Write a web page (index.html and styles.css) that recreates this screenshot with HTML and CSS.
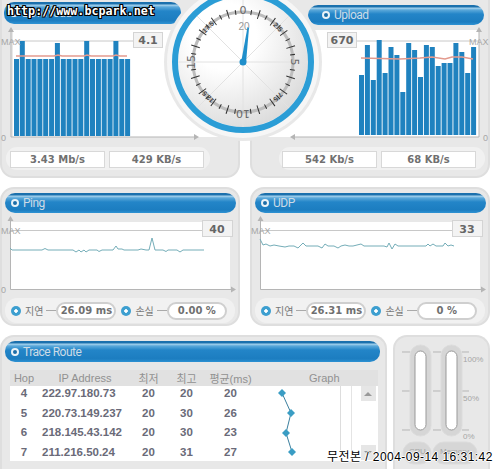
FILE: index.html

```html
<!DOCTYPE html>
<html lang="ko">
<head>
    <meta charset="UTF-8">
    <title>Network Monitor</title>
    <link rel="stylesheet" href="styles.css">
</head>
<body>
    <div class="dash">
        <!-- download -->
        <section class="panel panel-top">
            <div class="bar bar-down"><i class="dot"></i>Download</div>
            <svg class="chart-top" width="240" height="120" viewBox="0 26 240 120">
                <rect class="plot" x="13" y="30" width="227" height="107"/>
                <line class="grid" x1="11" y1="41" x2="134" y2="41"/>
                <path class="axis" d="M11 30V137H197"/>
                <path class="arrow" d="M11 27l-3 5h6zM199 137l-5-3v6z"/>
                <g class="bars">
                    <rect x="14" y="59" width="5" height="77"/><rect x="19.8" y="41" width="5" height="95"/><rect x="25.7" y="59" width="5" height="77"/><rect x="31.5" y="59" width="5" height="77"/><rect x="37.4" y="59" width="5" height="77"/><rect x="43.2" y="59" width="5" height="77"/><rect x="49.1" y="59" width="5" height="77"/><rect x="54.9" y="43" width="5" height="93"/><rect x="60.8" y="59" width="5" height="77"/><rect x="66.6" y="59" width="5" height="77"/><rect x="72.5" y="59" width="5" height="77"/><rect x="78.3" y="59" width="5" height="77"/><rect x="84.2" y="41" width="5" height="95"/><rect x="90" y="59" width="5" height="77"/><rect x="95.9" y="59" width="5" height="77"/><rect x="101.7" y="59" width="5" height="77"/><rect x="107.6" y="59" width="5" height="77"/><rect x="113.4" y="41" width="5" height="95"/><rect x="119.3" y="59" width="5" height="77"/><rect x="125.1" y="59" width="5" height="77"/>
                </g>
                <polyline class="avg" points="16,56 54,56 58,55 62,56 84,56 87,55 91,56 113,56 116,55 120,56 127,56"/>
                <text class="lbl" x="1" y="45">MAX</text>
                <text class="lbl" x="1" y="141">0</text>
                <rect class="valbox" x="133.500" y="32.500" width="29" height="15"/>
                <text class="val" x="148" y="44" text-anchor="middle">4.1</text>
            </svg>
            <div class="reads reads-down">
                <div class="read">3.43 Mb/s</div>
                <div class="read">429 KB/s</div>
            </div>
        </section>

        <!-- upload -->
        <section class="panel panel-top">
            <div class="bar bar-up"><i class="dot"></i>Upload</div>
            <svg class="chart-top" width="240" height="120" viewBox="250 26 240 120">
                <rect class="plot" x="250" y="30" width="229" height="107"/>
                <line class="grid" x1="356" y1="41" x2="479" y2="41"/>
                <path class="axis" d="M479 30V137H292"/>
                <path class="arrow" d="M479 27l-3 5h6zM290 137l5-3v6z"/>
                <g class="bars">
                    <rect x="359" y="75" width="5" height="60"/><rect x="364.900" y="45" width="5" height="90"/><rect x="370.800" y="80" width="5" height="55"/><rect x="376.700" y="40" width="5" height="95"/><rect x="382.600" y="73" width="5" height="62"/><rect x="388.500" y="47" width="5" height="88"/><rect x="394.400" y="55" width="5" height="80"/><rect x="400.300" y="92" width="5" height="43"/><rect x="406.200" y="43" width="5" height="92"/><rect x="412.100" y="50" width="5" height="85"/><rect x="418" y="77" width="5" height="58"/><rect x="423.900" y="45" width="5" height="90"/><rect x="429.800" y="47" width="5" height="88"/><rect x="435.700" y="66" width="5" height="69"/><rect x="441.600" y="63" width="5" height="72"/><rect x="447.500" y="63" width="5" height="72"/><rect x="453.400" y="43" width="5" height="92"/><rect x="459.300" y="52" width="5" height="83"/><rect x="465.200" y="73" width="5" height="62"/><rect x="471.100" y="47" width="5" height="88"/>
                </g>
                <polyline class="avg" points="361,58 400,59 420,58 432,57 445,59 452,57 462,57 473,59"/>
                <text class="lbl" x="469" y="45">MAX</text>
                <text class="lbl" x="483" y="141">0</text>
                <rect class="valbox" x="327.500" y="32.500" width="29" height="15"/>
                <text class="val" x="342" y="44" text-anchor="middle">670</text>
            </svg>
            <div class="reads reads-up">
                <div class="read">542 Kb/s</div>
                <div class="read">68 KB/s</div>
            </div>
        </section>

        <!-- ping -->
        <section class="panel panel-mid">
            <div class="bar bar-wide"><i class="dot"></i>Ping</div>
            <svg class="chart-mid" width="240" height="82" viewBox="0 214 240 82">
                <rect class="plot" x="10" y="222" width="220" height="67"/>
                <line class="grid" x1="10" y1="230.500" x2="203" y2="230.500"/>
                <path class="axis" d="M10.500 219V289.500H234"/>
                <path class="arrow" d="M10.500 216l-3 5h6zM236 289.500l-5-3v6z"/>
                <polyline class="trace" points="10,248 12,250 42,250 45,248.500 48,250 73,250 76,252 79,250 81,252 84,250 86,252 89,250 97,250 99,251.500 102,250 113,250 116,246 118,249 122,249 124,250 138,250 141,249 146,250 149,250 152,238 155,250 163,250 166,251.500 168,250 177,250 180,252 183,250 204,250"/>
                <text class="lbl" x="1" y="234">MAX</text>
                <text class="lbl" x="1" y="293">0</text>
                <rect class="valbox" x="202.500" y="220.500" width="30" height="16"/>
                <text class="val" x="217" y="233" text-anchor="middle">40</text>
            </svg>
            <div class="stats">
                <i class="play"></i><span class="stat-name">지연</span><i class="link"></i><span class="pill">26.09 ms</span>
                <i class="play play-2"></i><span class="stat-name">손실</span><i class="link"></i><span class="pill">0.00 %</span>
            </div>
        </section>

        <!-- udp -->
        <section class="panel panel-mid">
            <div class="bar bar-wide"><i class="dot"></i>UDP</div>
            <svg class="chart-mid" width="240" height="82" viewBox="250 214 240 82">
                <rect class="plot" x="260" y="222" width="220" height="67"/>
                <line class="grid" x1="260" y1="230.500" x2="453" y2="230.500"/>
                <path class="axis" d="M260.500 219V289.500H484"/>
                <path class="arrow" d="M260.500 216l-3 5h6zM486 289.500l-5-3v6z"/>
                <polyline class="trace" points="260,239 263,245 266,244 270,246 274,245 279,246 285,247 289,246 294,246 298,248 303,243 306,246 318,246 322,248 325,244 328,246 334,246 338,248 341,246 345,245 349,246 353,246 357,245 361,244 364,246 384,246 387,247 389,243 392,249 395,244 398,246 426,246 428,244 430,246 433,244 436,246 443,246 445,243 448,246 451,245 454,246"/>
                <text class="lbl" x="251" y="234">MAX</text>
                <rect class="valbox" x="452.500" y="220.500" width="30" height="16"/>
                <text class="val" x="467" y="233" text-anchor="middle">33</text>
            </svg>
            <div class="stats">
                <i class="play"></i><span class="stat-name">지연</span><i class="link"></i><span class="pill">26.31 ms</span>
                <i class="play play-2"></i><span class="stat-name">손실</span><i class="link"></i><span class="pill">0 %</span>
            </div>
        </section>

        <!-- trace route + cpu/mem -->
        <div class="bottom">
            <section class="panel panel-trace">
                <div class="bar bar-trace"><i class="dot"></i>Trace Route</div>
                <table class="trace-table">
                    <colgroup>
                        <col class="c-hop"><col class="c-ip"><col class="c-min"><col class="c-max"><col class="c-avg"><col class="c-graph"><col class="c-side">
                    </colgroup>
                    <thead>
                        <tr>
                            <th>Hop</th>
                            <th>IP Address</th>
                            <th>최저</th>
                            <th>최고</th>
                            <th class="th-avg">평균(ms)</th>
                            <th class="th-graph" colspan="2">Graph</th>
                        </tr>
                    </thead>
                    <tbody>
                        <tr>
                            <td>4</td><td class="ip">222.97.180.73</td><td>20</td><td>20</td><td>20</td>
                            <td class="graph-cell" rowspan="4">
                                <svg width="87" height="74" viewBox="253 386 87 74">
                                    <polyline class="hops" points="282,393 291,413 286,433 292,452"/>
                                    <g class="hop-dots">
                                        <path d="M282 389l4 4-4 4-4-4z"/>
                                        <path d="M291 409l4 4-4 4-4-4z"/>
                                        <path d="M286 429l4 4-4 4-4-4z"/>
                                        <path d="M292 448l4 4-4 4-4-4z"/>
                                    </g>
                                </svg>
                            </td>
                            <td class="side-cell" rowspan="4">
                                <div class="scroll">
                                    <div class="scroll-btn"><i class="tri"></i></div>
                                    <div class="scroll-btn"><i class="tri tri-down"></i></div>
                                </div>
                            </td>
                        </tr>
                        <tr><td>5</td><td class="ip">220.73.149.237</td><td>20</td><td>30</td><td>26</td></tr>
                        <tr><td>6</td><td class="ip">218.145.43.142</td><td>20</td><td>30</td><td>23</td></tr>
                        <tr class="last"><td>7</td><td class="ip">211.216.50.24</td><td>20</td><td>31</td><td>27</td></tr>
                    </tbody>
                </table>
            </section>
            <section class="panel panel-meter">
                <svg width="97" height="134" viewBox="393 335 97 134">
                    <path class="tick" d="M402 352h8M402 391h8M402 430h8M433 352h8M433 391h8M433 430h8M462 352h7M462 391h7M462 430h7"/>
                    <rect class="tube-out" x="410" y="345" width="21" height="91" rx="10.500"/>
                    <rect class="tube-in" x="415" y="351" width="11" height="79" rx="5.500"/>
                    <rect class="tube-out" x="441" y="345" width="21" height="91" rx="10.500"/>
                    <rect class="tube-in" x="446" y="351" width="11" height="79" rx="5.500"/>
                    <rect class="tube-out" x="403" y="442" width="28" height="22" rx="11"/>
                    <rect class="tube-out" x="433" y="442" width="44" height="22" rx="11"/>
                    <text class="lbl lbl-sm" x="463" y="362">100%</text>
                    <text class="lbl lbl-sm" x="463" y="401">50%</text>
                    <text class="lbl lbl-sm" x="463" y="439">0%</text>
                    <text class="lbl lbl-sm" x="409" y="454">CPU</text>
                    <text class="lbl lbl-sm" x="440" y="454">Memory</text>
                </svg>
            </section>
        </div>
    </div>

    <!-- dial sits over the two top panels -->
    <svg class="dial" width="170" height="150" viewBox="158 0 170 150">
        <defs>
            <radialGradient id="face" cx="0.35" cy="0.3" r="0.85">
                <stop offset="0.3" stop-color="#ffffff"/>
                <stop offset="1" stop-color="#d4d4d4"/>
            </radialGradient>
        </defs>
        <circle class="halo" cx="243" cy="62" r="79"/>
        <circle class="halo-in" cx="243" cy="62" r="76"/>
        <circle cx="243" cy="62" r="65" fill="url(#face)"/>
        <path class="spoke" d="M243 -3V127M178 62H308M197 16L289 108M289 16L197 108"/>
        <circle class="ring" cx="243" cy="62" r="68"/>
        <circle class="band" cx="243" cy="62" r="50"/>
        <circle class="minor" cx="243" cy="62" r="50"/>
        <circle class="major" cx="243" cy="62" r="50"/>
        <text class="dial-num" x="243" y="14" text-anchor="middle">0</text>
        <text class="dial-num" x="243" y="14" text-anchor="middle" transform="rotate(90 243 62)">5</text>
        <text class="dial-num" x="243" y="14" text-anchor="middle" transform="rotate(180 243 62)">10</text>
        <text class="dial-num" x="243" y="14" text-anchor="middle" transform="rotate(-90 243 62)">15</text>
        <text class="dial-small" x="243" y="15" text-anchor="middle" transform="rotate(45 243 62)">2.5</text>
        <text class="dial-small" x="243" y="15" text-anchor="middle" transform="rotate(135 243 62)">7.5</text>
        <text class="dial-small" x="243" y="15" text-anchor="middle" transform="rotate(-135 243 62)">12.5</text>
        <text class="dial-small" x="243" y="15" text-anchor="middle" transform="rotate(-45 243 62)">17.5</text>
        <text class="dial-val" x="244" y="30" text-anchor="middle">20</text>
        <path class="needle" d="M247.500 27L249 28L246 63H241z"/>
        <circle class="hub" cx="243" cy="62" r="3.500"/>
    </svg>

    <div class="stamp-url">http://www.bcpark.net</div>
    <div class="stamp-date">무전본 / 2004-09-14 16:31:42</div>
</body>
</html>
```

FILE: styles.css

```css
* {
    margin: 0;
    padding: 0;
    box-sizing: border-box;
}
body {
    background-color: #fff;
    width: 500px;
    height: 469px;
    overflow: hidden;
    position: relative;
    font-family: 'Liberation Sans', sans-serif;
    color: #666;
}
svg {
    display: block;
}
.dash {
    display: grid;
    grid-template-columns: 240px 240px;
    column-gap: 10px;
    width: 490px;
}
.panel {
    background: #e8e8e8;
    border: 2px solid #dedede;
    border-radius: 14px;
}
.panel-top {
    height: 178px;
    border-top: none;
    border-radius: 0 0 14px 14px;
}
.panel-top .chart-top {
    margin-left: -2px;
}
.panel-mid {
    height: 139px;
    margin-top: 9px;
}
.panel-mid .chart-mid {
    margin-left: -2px;
}

/* header bars */
.bar {
    display: flex;
    align-items: center;
    height: 20px;
    border-radius: 10px;
    color: #ccdbe6;
    font-family: 'Roboto', sans-serif;
    font-size: 12px;
    letter-spacing: -0.500px;
    background: linear-gradient(#1b70ad 0, #1b70ad 2px, #a9d4ee 3px, #5aa8da 5px, #2385c8 9px, #1c7dc0 85%, #2f93d4 100%);
}
.dot {
    width: 8px;
    height: 8px;
    margin: 0 4px 0 6px;
    border: 2.5px solid #eaf3f8;
    border-radius: 50%;
    background: #1c6ea8;
}
.bar-down {
    width: 177px;
    height: 22px;
    margin: 2px 0 2px 2px;
}
.bar-up {
    width: 176px;
    margin: 5px 0 0 56px;
}
.bar-up .dot {
    margin-left: 14px;
}
.bar-up + .chart-top {
    margin-top: 1px;
}
.bar-wide {
    width: 231px;
    margin: 4px 0 1px 3px;
}
.bar-trace {
    width: 375px;
    height: 21px;
    margin: 4px 0 0 3px;
}

/* charts */
.plot {
    fill: #fff;
}
.grid {
    stroke: #c8c8c8;
    stroke-width: 1;
}
.axis {
    fill: none;
    stroke: #b5b5b5;
    stroke-width: 1;
}
.arrow {
    fill: #b5b5b5;
}
.bars rect {
    fill: #1f82bf;
}
.avg {
    fill: none;
    stroke: #e39a8e;
    stroke-width: 1.5;
}
.trace {
    fill: none;
    stroke: #74adb8;
    stroke-width: 1;
}
.lbl {
    fill: #a6a6a6;
    font-family: 'Liberation Sans', sans-serif;
    font-size: 9px;
}
.lbl-sm {
    font-size: 8px;
}
.valbox {
    fill: #f3f3f3;
    stroke: #d4d4d4;
}
.val {
    fill: #666;
    font-family: 'DejaVu Sans', sans-serif;
    font-size: 11px;
    font-weight: bold;
}

/* readouts under top charts */
.reads {
    display: flex;
    gap: 4px;
    height: 23px;
    margin-top: 1px;
    padding: 4px 0 2px;
    background: #f1f1f1;
    border-radius: 11px;
}
.reads-down {
    width: 204px;
    margin-left: 4px;
    padding-left: 4px;
}
.reads-up {
    width: 206px;
    margin-left: 27px;
    padding-left: 3px;
}
.read {
    width: 95px;
    height: 17px;
    background: #fff;
    border: 1px solid #d8d8d8;
    text-align: center;
    font-family: 'DejaVu Sans', sans-serif;
    font-weight: bold;
    font-size: 10px;
    line-height: 15px;
    color: #707070;
}

/* ping / udp stats */
.stats {
    display: flex;
    align-items: center;
    height: 25px;
    margin: 2px 3px 0;
    padding-left: 6px;
    background: #f1f1f1;
    border-radius: 12px;
}
.play {
    width: 10px;
    height: 10px;
    border-radius: 50%;
    background: radial-gradient(circle, #fff 0 1.5px, #3d9fd0 2px);
}
.play-2 {
    margin-left: 5px;
}
.stat-name {
    margin-left: 4px;
    font-family: 'Noto Sans CJK KR', sans-serif;
    font-size: 10px;
    color: #777;
}
.link {
    width: 10px;
    height: 1px;
    margin-left: 3px;
    background: #aaa;
}
.pill {
    width: 60px;
    height: 18px;
    background: #fff;
    border: 2px solid #cfcfcf;
    border-radius: 9px;
    text-align: center;
    font-family: 'DejaVu Sans', sans-serif;
    font-weight: bold;
    font-size: 10px;
    line-height: 14px;
    color: #707070;
}

/* bottom row */
.bottom {
    grid-column: 1 / 3;
    display: flex;
    gap: 6px;
    margin-top: 9px;
}
.panel-trace {
    width: 387px;
    height: 134px;
    border-bottom: none;
    border-radius: 14px 14px 0 0;
}
.panel-meter {
    width: 97px;
    height: 134px;
    border-bottom: none;
    border-radius: 14px 14px 0 0;
}
.panel-meter svg {
    margin: -2px 0 0 -2px;
}
.trace-table {
    width: 368px;
    margin: 8px 0 0 8px;
    border-collapse: collapse;
    table-layout: fixed;
    background: #fff;
    font-size: 11.500px;
}
.c-hop { width: 28px; }
.c-ip { width: 94px; }
.c-min { width: 33px; }
.c-max { width: 43px; }
.c-avg { width: 45px; }
.c-graph { width: 87px; }
.c-side { width: 38px; }
.trace-table th {
    height: 15px;
    background: #e1e1e1;
    color: #919191;
    font-weight: normal;
    font-size: 11px;
    font-family: 'Liberation Sans', 'Noto Sans CJK KR', sans-serif;
}
.trace-table th.th-avg {
    white-space: nowrap;
}
.trace-table th.th-graph {
    text-align: left;
    padding-left: 56px;
}
.trace-table td {
    height: 19.500px;
    padding-bottom: 5px;
    line-height: 14px;
    vertical-align: top;
    text-align: center;
    font-weight: bold;
    color: #6a6a78;
}
.trace-table td.ip {
    text-align: left;
    padding-left: 4px;
    white-space: nowrap;
}
.trace-table .last td {
    height: 16px;
    padding-bottom: 0;
}
.trace-table td.graph-cell {
    padding: 0;
    border-right: 1px solid #ddd;
}
.trace-table td.side-cell {
    padding: 0 2px 0 10px;
}
.scroll {
    display: flex;
    flex-direction: column;
    justify-content: space-between;
    height: 74px;
    padding-left: 9px;
    border-left: 1px solid #e4e4e4;
}
.scroll-btn {
    display: flex;
    align-items: center;
    justify-content: center;
    height: 15px;
    background: #e6e6e6;
}
.tri {
    border-left: 4px solid transparent;
    border-right: 4px solid transparent;
    border-bottom: 4px solid #999;
}
.tri-down {
    border-bottom: none;
    border-top: 4px solid #999;
}
.hops {
    fill: none;
    stroke: #3b7f9e;
    stroke-width: 1;
}
.hop-dots path {
    fill: #3a9dc4;
}

/* meters */
.tick {
    fill: none;
    stroke: #b5b5b5;
}
.tube-out {
    fill: #d6d6d6;
    stroke: #dcdcdc;
}
.tube-in {
    fill: #fff;
    stroke: #999;
}

/* dial */
.dial {
    position: absolute;
    left: 158px;
    top: 0;
}
.halo {
    fill: #e8e8e8;
}
.halo-in {
    fill: #f6f6f6;
}
.spoke {
    fill: none;
    stroke: #e2e2e2;
}
.ring {
    fill: none;
    stroke: #2b9dd6;
    stroke-width: 6;
}
.band {
    fill: none;
    stroke: #bdbdbd;
    stroke-width: 3;
}
.minor {
    fill: none;
    stroke: #333;
    stroke-width: 5;
    stroke-dasharray: 1 14.708;
    stroke-dashoffset: -7.354;
}
.major {
    fill: none;
    stroke: #333;
    stroke-width: 9;
    stroke-dasharray: 0 15.208 1 14.708 1 14.708 1 14.708 1 15.208;
}
.dial-num {
    fill: #666;
    font-family: 'DejaVu Sans', sans-serif;
    font-size: 11px;
}
.dial-small {
    fill: #444;
    font-family: 'Liberation Sans', sans-serif;
    font-size: 7px;
    font-weight: bold;
}
.dial-val {
    fill: #999;
    font-family: 'Liberation Sans', sans-serif;
    font-size: 10px;
}
.needle {
    fill: #1f8fcb;
}
.hub {
    fill: #1f8fcb;
}

/* stamps over the shot */
.stamp-url {
    position: absolute;
    left: 7px;
    top: 4px;
    color: #fff;
    font-family: 'DejaVu Sans Mono', monospace;
    font-weight: bold;
    font-size: 11.700px;
    text-shadow: 1px 0 0 #000, -1px 0 0 #000, 0 1px 0 #000, 0 -1px 0 #000, 1px 1px 0 #000, -1px -1px 0 #000, 1px -1px 0 #000, -1px 1px 0 #000;
}
.stamp-date {
    position: absolute;
    left: 327px;
    top: 450px;
    color: #000;
    white-space: nowrap;
    font-family: 'Liberation Sans', 'Noto Sans CJK KR', sans-serif;
    font-size: 12px;
    line-height: 14px;
    letter-spacing: 0.450px;
    text-shadow: 1px 0 0 #fff, -1px 0 0 #fff, 0 1px 0 #fff, 0 -1px 0 #fff;
}
```
